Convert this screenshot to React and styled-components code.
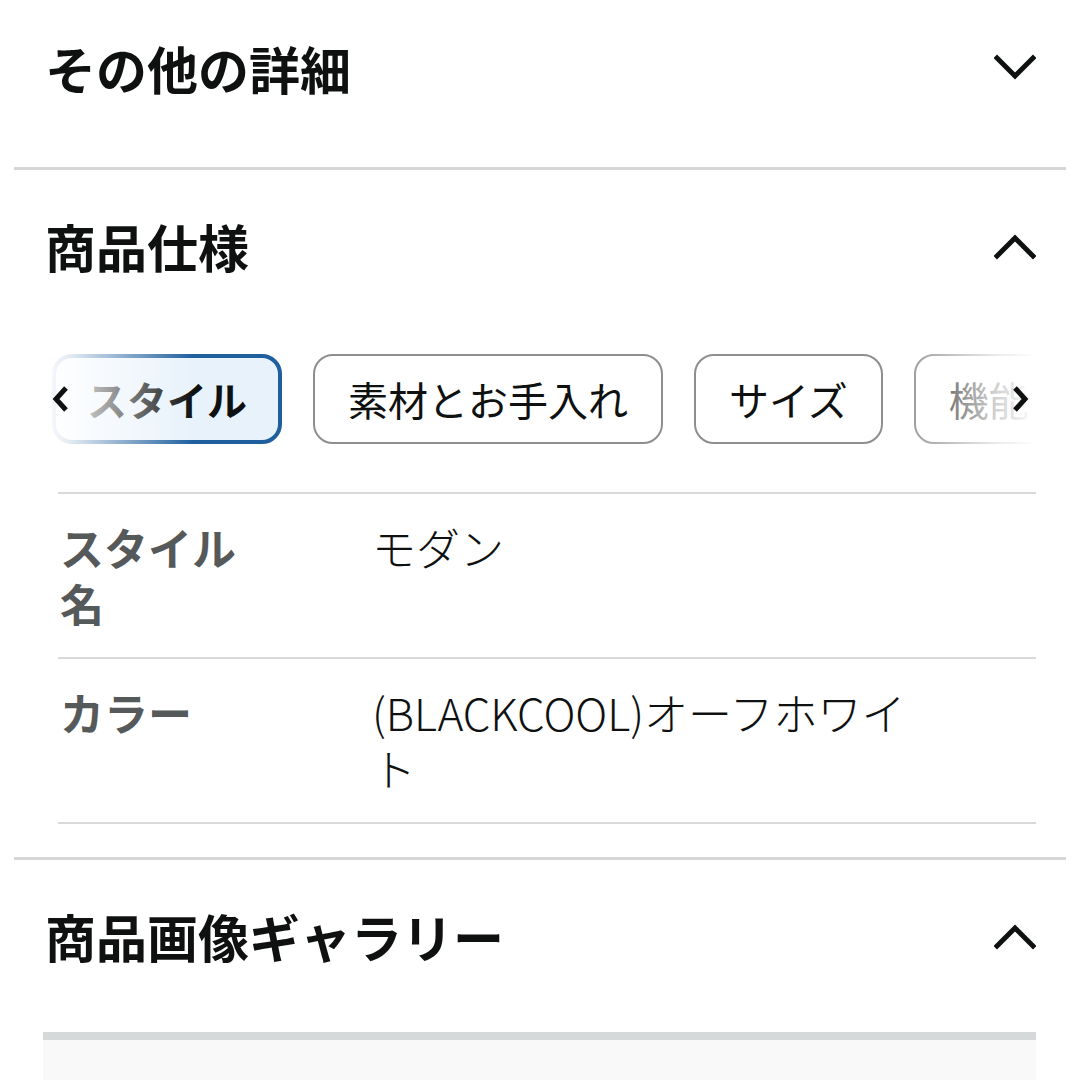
import React from "react";
import styled, { createGlobalStyle } from "styled-components";

const GlobalStyle = createGlobalStyle`
  html, body {
    margin: 0;
    padding: 0;
    background: #ffffff;
  }
  body {
    font-family: "Noto Sans CJK JP", "Noto Sans", sans-serif;
    color: #0f1111;
  }
`;

const Page = styled.div`
  width: 1080px;
  padding: 0 14px;
  box-sizing: border-box;
  margin-top: -8px;
`;

const Section = styled.section`
  border-bottom: 3px solid #d5d6d6;
  padding-bottom: ${(p) => p.$bottom || 0}px;
`;

const Header = styled.div`
  height: 152px;
  display: flex;
  align-items: center;
  justify-content: space-between;
  padding: 0 30px 0 31px;
`;

const Title = styled.h2`
  margin: 0;
  font-size: 51px;
  font-weight: 700;
  color: #0f1111;
  letter-spacing: 0;
`;

const Body = styled.div`
  padding: 0 30px 0 29px;
`;

const TabStrip = styled.div`
  position: relative;
  margin-top: 32px;
  height: 90px;
  overflow: hidden;

  &::before,
  &::after {
    content: "";
    position: absolute;
    top: 0;
    bottom: 0;
    z-index: 1;
    pointer-events: none;
  }
  &::before {
    left: 0;
    width: 150px;
    background: linear-gradient(
      to right,
      rgba(255, 255, 255, 1) 0%,
      rgba(255, 255, 255, 0.85) 20%,
      rgba(255, 255, 255, 0) 100%
    );
  }
  &::after {
    right: 0;
    width: 140px;
    background: linear-gradient(
      to left,
      rgba(255, 255, 255, 1) 0%,
      rgba(255, 255, 255, 0.8) 30%,
      rgba(255, 255, 255, 0) 100%
    );
  }
`;

const TabRow = styled.div`
  display: flex;
  gap: 31px;
  padding-left: 9px;
  height: 100%;
`;

const Tab = styled.div`
  flex: none;
  height: 90px;
  box-sizing: border-box;
  padding: 0 ${(p) => (p.$active ? 31 : 33)}px;
  display: flex;
  align-items: center;
  border-radius: 20px;
  font-size: 40px;
  white-space: nowrap;
  border: ${(p) => (p.$active ? "4px solid #1f5f9e" : "2px solid #8d8f8f")};
  background: ${(p) => (p.$active ? "#e8f2fb" : "#ffffff")};
  font-weight: ${(p) => (p.$active ? 700 : 400)};
  color: #0f1111;
`;

const Arrow = styled.div`
  position: absolute;
  top: 30px;
  ${(p) => (p.$side === "left" ? "left: 8px;" : "right: 6px;")}
  z-index: 2;
  width: 20px;
  height: 30px;
  display: flex;
  align-items: center;
  justify-content: center;
`;

const Table = styled.div`
  margin: 48px 0 0 15px;
  border-bottom: 2px solid #d8d9d9;
`;

const Row = styled.div`
  display: grid;
  grid-template-columns: 312px 570px;
  padding: 25px 0 26px 2px;
  border-top: 2px solid #d8d9d9;
`;

const Label = styled.div`
  max-width: 200px;
  font-size: 44px;
  line-height: 56px;
  font-weight: 700;
  color: #565959;
`;

const Value = styled.div`
  font-size: 44px;
  line-height: 56px;
  font-weight: 300;
  color: #0f1111;
  word-break: break-all;
`;

const Gallery = styled.div`
  margin-top: 20px;
  border-top: 8px solid #d5d9d9;
  height: 60px;
  background: #f9f9f9;
`;

function Chevron({ up }) {
  return (
    <svg width="42" height="28" viewBox="0 0 42 28">
      <polyline
        points={up ? "3,24 21,6 39,24" : "3,4 21,22 39,4"}
        fill="none"
        stroke="#0f1111"
        strokeWidth="5"
        strokeLinecap="square"
      />
    </svg>
  );
}

function SmallArrow({ dir }) {
  return (
    <svg width="20" height="30" viewBox="0 0 20 30">
      <polyline
        points={dir === "left" ? "15,4 5,15 15,26" : "5,4 15,15 5,26"}
        fill="none"
        stroke="#0f1111"
        strokeWidth="5"
      />
    </svg>
  );
}

const tabs = ["スタイル", "素材とお手入れ", "サイズ", "機能"];

const specs = [
  { label: "スタイル名", value: "モダン" },
  { label: "カラー", value: "(BLACKCOOL)オーフホワイト" },
];

export default function App() {
  return (
    <>
      <GlobalStyle />
      <Page>
        <Section $bottom={23}>
          <Header>
            <Title>その他の詳細</Title>
            <Chevron />
          </Header>
        </Section>

        <Section $bottom={33}>
          <Header>
            <Title>商品仕様</Title>
            <Chevron up />
          </Header>
          <Body>
            <TabStrip>
              <Arrow $side="left">
                <SmallArrow dir="left" />
              </Arrow>
              <TabRow>
                {tabs.map((t, i) => (
                  <Tab key={t} $active={i === 0}>
                    {t}
                  </Tab>
                ))}
              </TabRow>
              <Arrow $side="right">
                <SmallArrow dir="right" />
              </Arrow>
            </TabStrip>
            <Table>
              {specs.map((s) => (
                <Row key={s.label}>
                  <Label>{s.label}</Label>
                  <Value>{s.value}</Value>
                </Row>
              ))}
            </Table>
          </Body>
        </Section>

        <div>
          <Header>
            <Title>商品画像ギャラリー</Title>
            <Chevron up />
          </Header>
          <Body>
            <Gallery />
          </Body>
        </div>
      </Page>
    </>
  );
}
